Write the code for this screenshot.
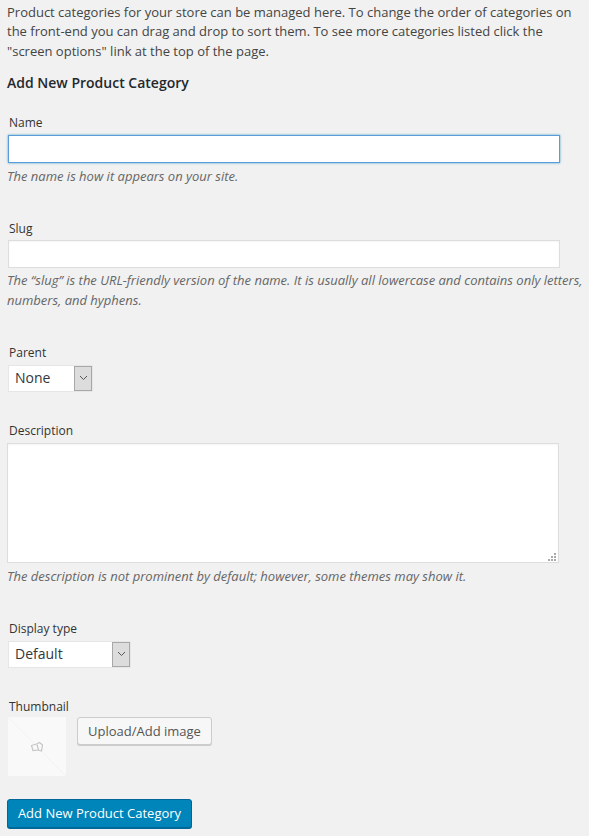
<div class="page">
  <p class="intro">Product categories for your store can be managed here. To change the order of categories on the front-end you can drag and drop to sort them. To see more categories listed click the "screen options" link at the top of the page.</p>
  <h3>Add New Product Category</h3>

  <div class="field name">
    <label for="n">Name</label>
    <input id="n" class="text focus" type="text" />
    <p class="hint">The name is how it appears on your site.</p>
  </div>

  <div class="field slug">
    <label for="s">Slug</label>
    <input id="s" class="text" type="text" />
    <p class="hint">The “slug” is the URL-friendly version of the name. It is usually all lowercase and contains only letters, numbers, and hyphens.</p>
  </div>

  <div class="field parent">
    <span class="lab">Parent</span>
    <div class="select sel-parent"><span class="val">None</span><span class="arrow"><svg width="9" height="6" viewBox="0 0 9 6"><path d="M1 1l3.5 3.5L8 1" fill="none" stroke="#555" stroke-width="1"/></svg></span></div>
  </div>

  <div class="field desc">
    <label for="d">Description</label>
    <div class="area-wrap">
      <textarea id="d"></textarea>
      <svg class="grip" width="10" height="10" viewBox="0 0 10 10"><g fill="#aaa"><rect x="6" y="0" width="2" height="2"/><rect x="3" y="3" width="2" height="2"/><rect x="6" y="3" width="2" height="2"/><rect x="0" y="6" width="2" height="2"/><rect x="3" y="6" width="2" height="2"/><rect x="6" y="6" width="2" height="2"/></g></svg>
    </div>
    <p class="hint">The description is not prominent by default; however, some themes may show it.</p>
  </div>

  <div class="field display">
    <span class="lab">Display type</span>
    <div class="select sel-display"><span class="val">Default</span><span class="arrow"><svg width="9" height="6" viewBox="0 0 9 6"><path d="M1 1l3.5 3.5L8 1" fill="none" stroke="#555" stroke-width="1"/></svg></span></div>
  </div>

  <div class="field thumb">
    <span class="lab">Thumbnail</span>
    <div class="thumb-row">
      <div class="ph">
        <svg width="58" height="59" viewBox="0 0 58 59"><path d="M0 0L58 59" stroke="#f2f2f2" stroke-width="1"/><g fill="none" stroke="#c6c6c6" stroke-width="1.2"><path d="M23.5 28.5l5-1.5 3-1.5 3 2.5-1 6-3.5-1-5 .5z"/><path d="M29 27.5l1.5 5.5"/></g></svg>
      </div>
      <button class="btn" type="button">Upload/Add image</button>
    </div>
  </div>

  <button class="primary" type="button">Add New Product Category</button>
</div>

<style>
  :global(body) {
    margin: 0;
    background: #f1f1f1;
  }
  .page {
    width: 589px;
    height: 836px;
    overflow: hidden;
    box-sizing: border-box;
    padding: 2.5px 0 0 7px;
    font-family: "Open Sans", sans-serif;
    font-size: 13px;
    line-height: 19.5px;
    color: #444;
  }
  p { margin: 0; }
  .intro { width: 582px; }
  h3 {
    margin: 11.5px 0 0;
    font-size: 14px;
    line-height: 20px;
    font-weight: 600;
    color: #23282d;
  }
  label, .lab {
    display: block;
    margin: 0 0 2px 2px;
    font-size: 12px;
    line-height: 18px;
    color: #333;
  }
  .text {
    display: block;
    box-sizing: border-box;
    width: 552px;
    height: 28px;
    margin: 0 0 0 1px;
    padding: 0;
    background: #fff;
    border: 1px solid #ddd;
    outline: none;
    box-shadow: inset 0 1px 2px rgba(0, 0, 0, 0.04);
  }
  .focus {
    border-color: #5b9dd9;
    box-shadow: 0 0 2px rgba(30, 140, 190, 0.8);
  }
  .hint {
    margin-top: 3px;
    font-style: italic;
    font-size: 13px;
    line-height: 20px;
    color: #666;
    width: 582px;
  }
  .name { margin-top: 21px; }
  .name label { margin-bottom: 3px; }
  .slug { margin-top: 34px; }
  .slug .hint { margin-top: 2px; }
  .parent { margin-top: 34px; }
  .parent .lab, .display .lab { margin-bottom: 3px; }
  .select {
    display: flex;
    box-sizing: border-box;
    height: 27px;
    margin-left: 1px;
    background: #fff;
    border: 1px solid #e6e6e6;
  }
  .sel-parent { width: 85px; }
  .sel-display { width: 123px; }
  .val {
    flex: 1;
    padding-left: 6px;
    font-size: 14px;
    line-height: 24px;
    color: #32373c;
  }
  .arrow {
    display: flex;
    align-items: center;
    justify-content: center;
    width: 16px;
    background: #dcdcdc;
    border: 1px solid #a8a8a8;
  }
  .desc { margin-top: 30px; }
  .desc label { margin-bottom: 3px; }
  .area-wrap {
    position: relative;
    width: 552px;
    height: 120px;
  }
  textarea {
    display: block;
    box-sizing: border-box;
    width: 552px;
    height: 120px;
    margin: 0;
    padding: 0;
    background: #fff;
    border: 1px solid #ddd;
    outline: none;
    resize: none;
    box-shadow: inset 0 1px 2px rgba(0, 0, 0, 0.04);
  }
  .grip {
    position: absolute;
    right: 1px;
    bottom: 0;
  }
  .display { margin-top: 34px; }
  .thumb { margin-top: 30px; }
  .thumb .lab { margin-bottom: 1px; }
  .thumb-row {
    display: flex;
    align-items: flex-start;
    gap: 11px;
    margin-left: 1px;
  }
  .ph {
    width: 58px;
    height: 59px;
    overflow: hidden;
    background: #f9f9f9;
  }
  .ph svg { display: block; }
  .btn {
    box-sizing: border-box;
    height: 28px;
    padding: 0 10px;
    font-family: inherit;
    font-size: 13px;
    line-height: 26px;
    color: #555;
    background: #f7f7f7;
    border: 1px solid #ccc;
    border-radius: 3px;
    box-shadow: 0 1px 0 #ccc;
  }
  .primary {
    display: block;
    box-sizing: border-box;
    width: 185px;
    height: 29px;
    margin-top: 23px;
    padding: 0;
    font-family: inherit;
    font-size: 13px;
    line-height: 26px;
    color: #fff;
    background: #0085ba;
    border: 1px solid #006799;
    border-radius: 3px;
    box-shadow: 0 1px 0 #006799;
  }
</style>
